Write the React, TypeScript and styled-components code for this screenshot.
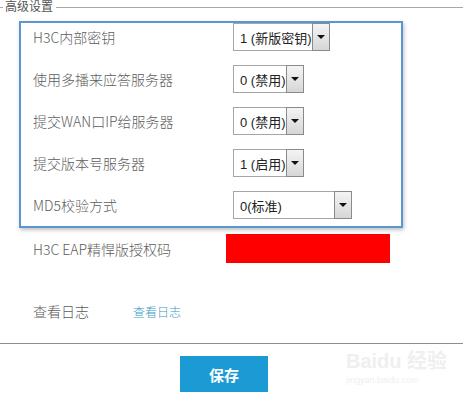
import React from "react";
import styled, { createGlobalStyle } from "styled-components";

const Global = createGlobalStyle`
  html, body { margin: 0; padding: 0; background: #fff; }
  body { font-family: "Noto Sans CJK SC", "Liberation Sans", sans-serif; }
`;

const Page = styled.div`
  position: relative;
  width: 463px;
  height: 396px;
  overflow: hidden;
  background: #fff;
`;

const LegendRow = styled.div`
  display: flex;
  align-items: center;
  height: 14px;
`;

const Rule = styled.div<{ $w?: number }>`
  height: 1px;
  background: #a8a8a8;
  ${(p) => (p.$w ? `width: ${p.$w}px;` : "flex: 1;")}
`;

const LegendText = styled.span`
  font-family: "Liberation Sans", "Noto Sans CJK SC", sans-serif;
  font-size: 12px;
  line-height: 13px;
  color: #555;
  padding: 0 3px 0 2px;
`;

const BlueBox = styled.div`
  margin: 7px 0 0 19px;
  width: 368px;
  border: 2px solid #5a96d2;
  box-shadow: 1px 2px 4px rgba(0, 0, 0, 0.25);
  padding: 0 0 7px 12px;
  display: flex;
  flex-direction: column;
  gap: 14px;
  background: #fff;
`;

const Row = styled.div<{ $h?: number }>`
  display: flex;
  align-items: center;
  height: ${(p) => p.$h ?? 28}px;
`;

const Label = styled.div<{ $w?: number }>`
  width: ${(p) => p.$w ?? 200}px;
  flex: none;
  font-size: 14px;
  font-weight: 300;
  color: #5c5c5c;
  white-space: nowrap;
`;

const SelectBox = styled.div<{ $w: number }>`
  width: ${(p) => p.$w}px;
  height: 28px;
  box-sizing: border-box;
  border: 1px solid #a6a6a6;
  display: flex;
  align-items: stretch;
  background: #fff;
`;

const SelectText = styled.div`
  flex: 1;
  display: flex;
  align-items: center;
  padding-left: 6px;
  font-family: "Liberation Sans", "Noto Sans CJK SC", sans-serif;
  font-size: 13px;
  color: #222;
  white-space: nowrap;
`;

const ArrowBtn = styled.div`
  width: 16px;
  margin: -1px -1px -1px 0;
  border: 1px solid #8a8a8a;
  background: linear-gradient(#f4f4f4, #d6d6d6);
  display: flex;
  align-items: center;
  justify-content: center;
  &::after {
    content: "";
    border-left: 4px solid transparent;
    border-right: 4px solid transparent;
    border-top: 4px solid #111;
  }
`;

const Outer = styled.div`
  padding-left: 33px;
  display: flex;
  flex-direction: column;
`;

const RedBox = styled.div`
  width: 164px;
  height: 29px;
  margin-left: -7px;
  background: #ff0000;
`;

const LinkText = styled.span`
  font-size: 12px;
  font-weight: 300;
  color: #3c9ac4;
`;

const Divider = styled.div`
  height: 1px;
  background: #8e8e8e;
  margin-top: 22px;
`;

const BtnRow = styled.div`
  display: flex;
  padding: 12px 0 0 180px;
`;

const SaveButton = styled.button`
  width: 88px;
  height: 36px;
  border: none;
  background: #1b9ad3;
  color: #fff;
  font-family: "Noto Sans CJK SC", sans-serif;
  font-weight: 700;
  font-size: 15px;
  padding: 0;
`;

const Watermark = styled.div`
  position: absolute;
  left: 346px;
  top: 350px;
  color: #efefef;
  font-family: "Liberation Sans", "Noto Sans CJK SC", sans-serif;
  pointer-events: none;
  white-space: nowrap;
`;

const WmTitle = styled.div`
  font-size: 20px;
  font-weight: 700;
  line-height: 22px;
`;

const WmSub = styled.div`
  font-size: 9px;
  line-height: 11px;
  margin-top: 3px;
`;

const Select = ({ w, text }: { w: number; text: string }) => (
  <SelectBox $w={w}>
    <SelectText>{text}</SelectText>
    <ArrowBtn />
  </SelectBox>
);

const rows = [
  { label: "H3C内部密钥", w: 97, text: "1 (新版密钥)" },
  { label: "使用多播来应答服务器", w: 71, text: "0 (禁用)" },
  { label: "提交WAN口IP给服务器", w: 71, text: "0 (禁用)" },
  { label: "提交版本号服务器", w: 71, text: "1 (启用)" },
  { label: "MD5校验方式", w: 119, text: "0(标准)" },
];

export default function App() {
  return (
    <Page>
      <Global />
      <LegendRow>
        <Rule $w={3} />
        <LegendText>高级设置</LegendText>
        <Rule />
      </LegendRow>
      <BlueBox>
        {rows.map((r) => (
          <Row key={r.label}>
            <Label>{r.label}</Label>
            <Select w={r.w} text={r.text} />
          </Row>
        ))}
      </BlueBox>
      <Outer>
        <Row $h={29} style={{ marginTop: 6 }}>
          <Label>H3C EAP精悍版授权码</Label>
          <RedBox />
        </Row>
        <Row $h={20} style={{ marginTop: 38 }}>
          <Label $w={100}>查看日志</Label>
          <LinkText>查看日志</LinkText>
        </Row>
      </Outer>
      <Divider />
      <BtnRow>
        <SaveButton>保存</SaveButton>
      </BtnRow>
      <Watermark>
        <WmTitle>Baidu 经验</WmTitle>
        <WmSub>jingyan.baidu.com</WmSub>
      </Watermark>
    </Page>
  );
}
